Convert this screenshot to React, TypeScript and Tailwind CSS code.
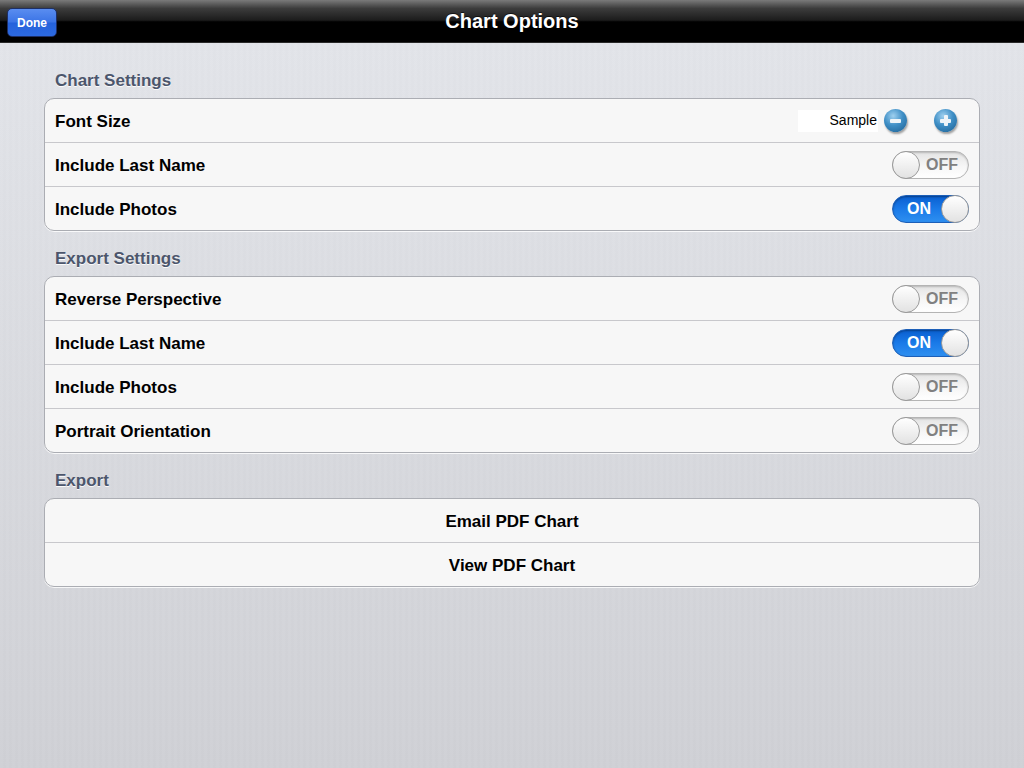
import type React from "react";

type ToggleProps = { on: boolean };

const Toggle: React.FC<ToggleProps> = ({ on }) => {
	if (on) {
		return (
			<div className="relative flex h-[28px] w-[77px] items-center rounded-full border border-[#1c5fb8] bg-[linear-gradient(to_bottom,#0a5fd0_0%,#1a7ae8_50%,#2e8ff0_100%)] shadow-[inset_0_1px_2px_rgba(0,0,0,0.35)]">
				<span className="ml-[14px] text-[16px] font-bold text-white">ON</span>
				<div className="absolute right-[-1px] top-[-1px] h-[28px] w-[28px] rounded-full border border-[#9a9a9a] bg-[linear-gradient(to_bottom,#ffffff,#e2e2e2)]" />
			</div>
		);
	}
	return (
		<div className="relative flex h-[28px] w-[77px] items-center justify-end rounded-full border border-[#b4b4b4] bg-[linear-gradient(to_bottom,#e4e4e4_0%,#f6f6f6_55%,#ffffff_100%)] shadow-[inset_0_1px_2px_rgba(0,0,0,0.2)]">
			<span className="mr-[10px] text-[16px] font-bold text-[#808080]">OFF</span>
			<div className="absolute left-[-1px] top-[-1px] h-[28px] w-[28px] rounded-full border border-[#9a9a9a] bg-[linear-gradient(to_bottom,#ffffff,#e2e2e2)]" />
		</div>
	);
};

const RoundButton: React.FC<{ plus?: boolean }> = ({ plus }) => (
	<div className="relative flex h-[23px] w-[23px] items-center justify-center rounded-full bg-[radial-gradient(circle_at_40%_30%,#9fd0ef_0%,#3f8fc6_45%,#1b5d8f_100%)] shadow-[1px_2px_2px_rgba(0,0,0,0.35)]">
		<div className="h-[4px] w-[11px] rounded-[1px] bg-[#eef4f8]" />
		{plus && (
			<div className="absolute h-[11px] w-[4px] rounded-[1px] bg-[#eef4f8]" />
		)}
	</div>
);

const Row: React.FC<{ label: string; right?: React.ReactNode; last?: boolean; center?: boolean }> = ({
	label,
	right,
	last,
	center,
}) => (
	<div
		className={`flex items-center px-[10px] ${last ? "h-[43px]" : "h-[44px] border-b border-[#c8c8cc]"} ${center ? "justify-center" : "justify-between"}`}
	>
		<span className="mt-[2px] text-[17px] font-bold text-black">{label}</span>
		{right}
	</div>
);

const Group: React.FC<{ children: React.ReactNode }> = ({ children }) => (
	<div className="overflow-hidden rounded-[10px] border border-[#abadb3] bg-[#f7f7f7] shadow-[0_1px_0_rgba(255,255,255,0.8)]">
		{children}
	</div>
);

const SectionTitle: React.FC<{ title: string }> = ({ title }) => (
	<div className="flex h-[45px] items-end px-[11px] pb-[7px] text-[17px] leading-[20px] font-bold text-[#4c566c] [text-shadow:0_1px_0_rgba(255,255,255,0.9)]">
		{title}
	</div>
);

export default function App() {
	return (
		<div className="flex h-[768px] w-[1024px] flex-col font-['Liberation_Sans',Arial,sans-serif]">
			<div className="relative flex h-[43px] shrink-0 items-center justify-center border-b border-[#2a2a2a] bg-[linear-gradient(to_bottom,#7a7a7a_0%,#3c3c3c_20%,#1c1c1c_48%,#000000_52%,#000000_100%)]">
				<div className="absolute left-[7px] top-[8px] flex h-[29px] w-[50px] items-center justify-center rounded-[5px] border border-[#1d2f66] bg-[linear-gradient(to_bottom,#5a8df0_0%,#3b74e6_48%,#2462dc_52%,#2d6ae0_100%)]">
					<span className="text-[12px] font-bold text-white">Done</span>
				</div>
				<span className="text-[20px] font-bold text-white [text-shadow:0_-1px_0_rgba(0,0,0,0.6)]">
					Chart Options
				</span>
			</div>

			<div className="flex flex-1 flex-col bg-[repeating-linear-gradient(to_right,rgba(255,255,255,0.025)_0px,rgba(255,255,255,0.025)_3px,rgba(0,0,0,0.005)_3px,rgba(0,0,0,0.005)_6px),linear-gradient(to_bottom,#e2e4e9,#cfd0d5)] px-[44px] pt-[10px]">
				<SectionTitle title="Chart Settings" />
				<Group>
					<Row
						label="Font Size"
						right={
							<div className="flex items-center">
								<div className="flex h-[22px] w-[80px] items-center justify-end bg-white pr-[1px] text-[14px] text-black">
									Sample
								</div>
								<div className="ml-[6px]">
									<RoundButton />
								</div>
								<div className="ml-[27px] mr-[12px]">
									<RoundButton plus />
								</div>
							</div>
						}
					/>
					<Row label="Include Last Name" right={<Toggle on={false} />} />
					<Row label="Include Photos" right={<Toggle on />} last />
				</Group>

				<SectionTitle title="Export Settings" />
				<Group>
					<Row label="Reverse Perspective" right={<Toggle on={false} />} />
					<Row label="Include Last Name" right={<Toggle on />} />
					<Row label="Include Photos" right={<Toggle on={false} />} />
					<Row label="Portrait Orientation" right={<Toggle on={false} />} last />
				</Group>

				<SectionTitle title="Export" />
				<Group>
					<Row label="Email PDF Chart" center />
					<Row label="View PDF Chart" center last />
				</Group>
			</div>
		</div>
	);
}
